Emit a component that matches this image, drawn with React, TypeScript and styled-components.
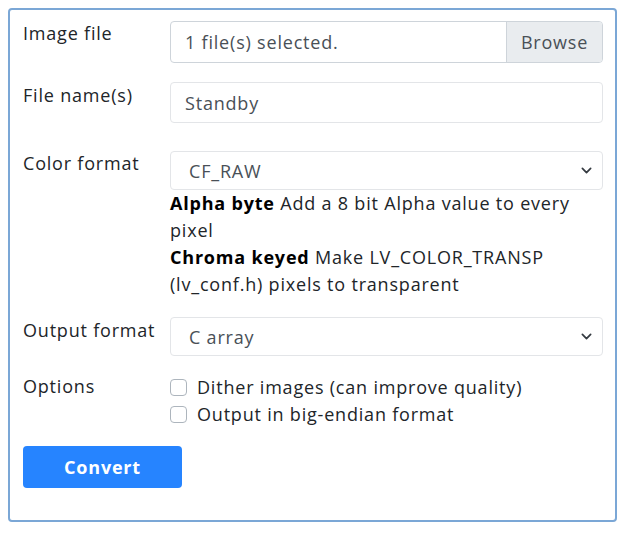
import React from 'react';
import styled, { createGlobalStyle } from 'styled-components';

const Global = createGlobalStyle`
  body {
    margin: 8px;
    background: #fff;
    font-family: "Open Sans", "Noto Sans", sans-serif;
    color: #212529;
    letter-spacing: 0.8px;
  }
`;

const Panel = styled.form`
  width: 609px;
  box-sizing: border-box;
  border: 2px solid #7ba7d6;
  border-radius: 4px;
  padding: 11px 12px 32px 13px;
`;

const Row = styled.div<{ gap?: number }>`
  display: grid;
  grid-template-columns: 147px 1fr;
  margin-bottom: ${p => p.gap ?? 19}px;
`;

const Label = styled.label<{ top?: number }>`
  font-size: 18px;
  padding-top: ${p => p.top ?? 0}px;
  line-height: 24px;
`;

const FileGroup = styled.div`
  display: flex;
  height: 42px;
  box-sizing: border-box;
  border: 1px solid #ced4da;
  border-radius: 4px;
  overflow: hidden;
`;

const FileText = styled.span`
  flex: 1;
  padding: 0 14px;
  font-size: 18px;
  line-height: 40px;
  color: #495057;
`;

const Browse = styled.span`
  width: 95px;
  text-align: center;
  background: #e9ecef;
  border-left: 1px solid #ced4da;
  font-size: 18px;
  line-height: 40px;
  color: #495057;
`;

const TextInput = styled.input`
  display: block;
  width: 100%;
  height: 41px;
  box-sizing: border-box;
  border: 1px solid #e3e5e8;
  border-radius: 4px;
  padding: 0 14px;
  font: inherit;
  font-size: 18px;
  letter-spacing: 0.8px;
  color: #495057;
  outline: none;
`;

const Select = styled.div`
  display: flex;
  align-items: center;
  justify-content: space-between;
  height: 39px;
  box-sizing: border-box;
  border: 1px solid #e3e5e8;
  border-radius: 4px;
  padding: 0 10px 0 18px;
  font-size: 18px;
  color: #495057;
`;

const Hint = styled.div`
  font-size: 18px;
  line-height: 27px;
  b { font-weight: 700; color: #000; }
`;

const Checks = styled.div`
  display: flex;
  flex-direction: column;
`;

const Check = styled.label`
  display: flex;
  align-items: center;
  gap: 10px;
  font-size: 18px;
  line-height: 27px;
`;

const Box = styled.span`
  width: 17px;
  height: 17px;
  box-sizing: border-box;
  border: 1px solid #adb5bd;
  border-radius: 4px;
  background: #fff;
`;

const Button = styled.button`
  display: block;
  width: 159px;
  height: 42px;
  border: none;
  border-radius: 4px;
  background: #2684ff;
  color: #fff;
  font-family: inherit;
  font-size: 18px;
  letter-spacing: 0.8px;
  font-weight: 700;
`;

const Chevron = () => (
  <svg width="11" height="11" viewBox="0 0 16 16">
    <path d="M2 5l6 6 6-6" fill="none" stroke="#343a40" strokeWidth="2.5" strokeLinecap="round" strokeLinejoin="round" />
  </svg>
);

const App = () => {
  return (
    <>
      <Global />
      <Panel onSubmit={e => e.preventDefault()}>
        <Row>
          <Label>Image file</Label>
          <FileGroup>
            <FileText>1 file(s) selected.</FileText>
            <Browse>Browse</Browse>
          </FileGroup>
        </Row>
        <Row gap={28}>
          <Label top={1}>File name(s)</Label>
          <TextInput defaultValue="Standby" />
        </Row>
        <Row gap={19}>
          <Label>Color format</Label>
          <div>
            <Select>CF_RAW<Chevron /></Select>
            <Hint><b>Alpha byte</b> Add a 8 bit Alpha value to every pixel</Hint>
            <Hint><b>Chroma keyed</b> Make LV_COLOR_TRANSP (lv_conf.h) pixels to transparent</Hint>
          </div>
        </Row>
        <Row gap={18}>
          <Label top={1}>Output format</Label>
          <Select>C array<Chevron /></Select>
        </Row>
        <Row gap={18}>
          <Label top={0}>Options</Label>
          <Checks>
            <Check><Box />Dither images (can improve quality)</Check>
            <Check><Box />Output in big-endian format</Check>
          </Checks>
        </Row>
        <Button type="submit">Convert</Button>
      </Panel>
    </>
  );
};

export default App;
